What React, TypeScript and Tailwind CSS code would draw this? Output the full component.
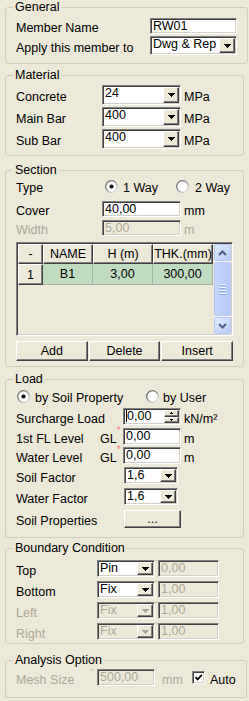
import React, { useId } from "react";

const sunken =
  "border border-t-[#808080] border-l-[#808080] border-r-white border-b-white shadow-[inset_1px_1px_0_#404040,inset_-1px_-1px_0_#d4d0c8]";
const raised =
  "border border-t-white border-l-white border-r-[#404040] border-b-[#404040] shadow-[inset_-1px_-1px_0_#808080] bg-[#ece9d8]";

function Arrow({ disabled }: { disabled?: boolean }) {
  const c = disabled ? "#aca899" : "#000";
  return (
    <svg width="7" height="4" viewBox="0 0 7 4" shapeRendering="crispEdges">
      <rect x="0" y="0" width="7" height="1" fill={c} />
      <rect x="1" y="1" width="5" height="1" fill={c} />
      <rect x="2" y="2" width="3" height="1" fill={c} />
      <rect x="3" y="3" width="1" height="1" fill={c} />
    </svg>
  );
}

function Edit({
  value,
  className = "",
  disabled,
  caret,
}: {
  value: string;
  className?: string;
  disabled?: boolean;
  caret?: boolean;
}) {
  return (
    <div
      className={`${sunken} ${className} flex items-start p-[1px] pl-[2px] leading-[12px] ${
        disabled ? "bg-[#ece9d8] text-[#aca899]" : "bg-white"
      }`}
    >
      {caret && <span className="w-px h-[12px] bg-black" />}
      <span>{value}</span>
    </div>
  );
}

function Combo({
  value,
  className = "",
  disabled,
}: {
  value: string;
  className?: string;
  disabled?: boolean;
}) {
  return (
    <div
      className={`${sunken} ${className} flex p-[1px] ${
        disabled ? "bg-[#ece9d8] text-[#aca899]" : "bg-white"
      }`}
    >
      <span className="flex-1 pl-[1px] leading-[12px]">{value}</span>
      <div className={`${raised} w-[16px] flex items-center justify-center`}>
        <Arrow disabled={disabled} />
      </div>
    </div>
  );
}

function Radio({ checked }: { checked?: boolean }) {
  const id = useId();
  return (
    <svg width="13" height="13" viewBox="0 0 13 13">
      <defs>
        <linearGradient id={id} x1="0" y1="0" x2="1" y2="1">
          <stop offset="0" stopColor="#5a5a5a" />
          <stop offset="0.55" stopColor="#9a9a9a" />
          <stop offset="1" stopColor="#f4f4f4" />
        </linearGradient>
      </defs>
      <circle cx="6.5" cy="6.5" r="5.8" fill="#fff" stroke={`url(#${id})`} strokeWidth="1.3" />
      {checked && <circle cx="6.5" cy="6.5" r="2.1" fill="#000" />}
    </svg>
  );
}

function Group({
  title,
  className = "",
  body = "",
  children,
}: {
  title: string;
  className?: string;
  body?: string;
  children: React.ReactNode;
}) {
  return (
    <fieldset className={`mx-[5px] rounded-[3px] border border-[#d0d0bf] ${className}`}>
      <legend className="ml-[7px] px-[2px] leading-[14px]">{title}</legend>
      <div className={`px-[10px] ${body}`}>{children}</div>
    </fieldset>
  );
}

function Label({ children, className = "" }: { children: React.ReactNode; className?: string }) {
  return <span className={`shrink-0 pt-[4px] leading-[14px] ${className}`}>{children}</span>;
}

function Mark() {
  return (
    <span className="w-[3px] self-start -mt-[2px] text-[8px] leading-[8px] text-[#c8c5b5]">*</span>
  );
}

function ScrollBtn({ up }: { up?: boolean }) {
  return (
    <div className="h-[17px] rounded-[2px] border border-[#b4c7f5] bg-gradient-to-br from-[#e2ebfe] to-[#b7cbf8] flex items-center justify-center">
      <svg width="9" height="6" viewBox="0 0 9 6">
        <path
          d={up ? "M1 5 L4.5 1.5 L8 5" : "M1 1 L4.5 4.5 L8 1"}
          stroke="#4d6185"
          strokeWidth="2"
          fill="none"
        />
      </svg>
    </div>
  );
}

export default function App() {
  const head = `${raised} flex items-center justify-center leading-[14px]`;
  const cell = "bg-[#c0dcc0] border-r border-b border-[#a4b4a0] flex items-center justify-center";
  return (
    <div className="min-h-screen bg-[#ece9d8] text-black text-[12.5px] font-['Liberation_Sans',Arial,sans-serif]">
      <Group title="General" body="pb-[8px]">
        <div className="mt-[4px] h-[16px] flex items-center">
          <Label className="w-[134px]">Member Name</Label>
          <Edit value="RW01" className="w-[87px] h-[16px]" />
        </div>
        <div className="mt-[2px] h-[19px] flex items-center">
          <Label className="w-[134px]">Apply this member to</Label>
          <Combo value="Dwg & Rep" className="w-[87px] h-[19px]" />
        </div>
      </Group>

      <Group title="Material" className="mt-[4px]" body="pb-[6px]">
        {[
          ["Concrete", "24", "mt-[3px]"],
          ["Main Bar", "400", "mt-[2px]"],
          ["Sub Bar", "400", "mt-[2px]"],
        ].map(([l, v, m]) => (
          <div key={l} className={`${m} h-[20px] flex items-center`}>
            <Label className="w-[86px]">{l}</Label>
            <Combo value={v} className="w-[79px] h-[20px]" />
            <Label className="ml-[3px]">MPa</Label>
          </div>
        ))}
      </Group>

      <Group title="Section" className="mt-[7px]" body="pb-[5px]">
        <div className="mt-[1px] h-[16px] flex items-center">
          <Label className="w-[89px]">Type</Label>
          <div className="w-[71px] flex items-center gap-[5px]">
            <Radio checked />
            <Label>1 Way</Label>
          </div>
          <div className="flex items-center gap-[6px]">
            <Radio />
            <Label>2 Way</Label>
          </div>
        </div>
        <div className="mt-[7px] h-[16px] flex items-center">
          <Label className="w-[86px]">Cover</Label>
          <Edit value="40,00" className="w-[79px] h-[16px]" />
          <Label className="ml-[3px]">mm</Label>
        </div>
        <div className="mt-[3px] h-[16px] flex items-center text-[#aca899]">
          <Label className="w-[86px]">Width</Label>
          <Edit value="5,00" disabled className="w-[79px] h-[16px]" />
          <Label className="ml-[3px]">m</Label>
        </div>

        <div className={`${sunken} mt-[6px] h-[94px] flex p-[1px] bg-[#ece9d8]`}>
          <div className="flex-1 flex flex-col">
            <div className="h-[20px] flex">
              <div className={`${head} w-[25px]`}>-</div>
              <div className={`${head} w-[50px]`}>NAME</div>
              <div className={`${head} w-[60px]`}>H (m)</div>
              <div className={`${head} w-[60px]`}>THK.(mm)</div>
            </div>
            <div className="h-[21px] flex">
              <div className={`${head} w-[25px]`}>1</div>
              <div className={`${cell} w-[50px]`}>B1</div>
              <div className={`${cell} w-[60px]`}>3,00</div>
              <div className={`${cell} w-[60px]`}>300,00</div>
            </div>
          </div>
          <div className="w-[17px] flex flex-col bg-[#f7f6f1]">
            <ScrollBtn up />
            <div className="mt-[1px] flex-1 rounded-[2px] border border-[#b4c7f5] bg-gradient-to-r from-[#c6d6fc] to-[#b5c9f8] flex flex-col items-center justify-center gap-[1px]">
              {[0, 1, 2, 3].map((i) => (
                <div key={i} className="w-[7px] h-px bg-[#eef3fe] border-b border-[#8cb0f8] box-content" />
              ))}
            </div>
            <div className="mt-[1px]">
              <ScrollBtn />
            </div>
          </div>
        </div>

        <div className="mt-[5px] h-[20px] grid grid-cols-3 gap-[1px]">
          {["Add", "Delete", "Insert"].map((b) => (
            <div key={b} className={`${raised} flex items-center justify-center leading-[14px]`}>
              {b}
            </div>
          ))}
        </div>
      </Group>

      <Group title="Load" className="mt-[5px]" body="pb-[9px]">
        <div className="mt-[2px] h-[16px] flex items-center">
          <div className="ml-[1px] w-[129px] flex items-center gap-[5px]">
            <Radio checked />
            <Label>by Soil Property</Label>
          </div>
          <div className="flex items-center gap-[4px]">
            <Radio />
            <Label>by User</Label>
          </div>
        </div>
        <div className="mt-[4px] h-[17px] flex items-center">
          <Label className="w-[107px]">Surcharge Load</Label>
          <div className={`${sunken} w-[58px] h-[17px] bg-white flex p-[1px] pl-[2px]`}>
            <span className="w-px h-[12px] bg-black" />
            <span className="flex-1 leading-[12px]">0,00</span>
            <div className="w-[15px] flex flex-col">
              {[true, false].map((up) => (
                <div key={String(up)} className={`${raised} flex-1 flex items-center justify-center`}>
                  <svg width="3" height="2" viewBox="0 0 3 2" shapeRendering="crispEdges">
                    <rect x="1" y={up ? 0 : 1} width="1" height="1" fill="#000" />
                    <rect x="0" y={up ? 1 : 0} width="3" height="1" fill="#000" />
                  </svg>
                </div>
              ))}
            </div>
          </div>
          <Label className="ml-[3px]">kN/m²</Label>
        </div>
        {[
          ["1st FL Level", "mt-[3px]"],
          ["Water Level", "mt-[2px]"],
        ].map(([l, m]) => (
          <div key={l} className={`${m} h-[17px] flex items-center`}>
            <Label className="w-[84px]">{l}</Label>
            <div className="w-[23px] flex">
              <Label>GL</Label>
              <span className="text-[10px] leading-[9px] text-[#ff8080] self-start -mt-[2px]">*</span>
            </div>
            <Edit value="0,00" className="w-[58px] h-[17px]" />
            <Label className="ml-[3px]">m</Label>
          </div>
        ))}
        {[
          ["Soil Factor", "mt-[3px]"],
          ["Water Factor", "mt-[4px]"],
        ].map(([l, m]) => (
          <div key={l} className={`${m} h-[17px] flex items-center`}>
            <Label className="w-[108px]">{l}</Label>
            <Combo value="1,6" className="w-[54px] h-[17px]" />
          </div>
        ))}
        <div className="mt-[5px] h-[18px] flex items-center">
          <Label className="w-[108px]">Soil Properties</Label>
          <div className={`${raised} w-[57px] h-[18px] flex items-center justify-center leading-[12px]`}>
            ...
          </div>
        </div>
      </Group>

      <Group title="Boundary Condition" className="mt-[3px]" body="pb-[3px]">
        {[
          ["Top", "Pin", "0,00", false, "mt-[5px]"],
          ["Bottom", "Fix", "1,00", false, "mt-[4px]"],
          ["Left", "Fix", "1,00", true, "mt-[4px]"],
          ["Right", "Fix", "1,00", true, "mt-[4px]"],
        ].map(([l, c, v, d, m]) => (
          <div key={l as string} className={`${m} h-[17px] flex items-center`}>
            <Label className={`w-[81px] ${d ? "text-[#aca899]" : ""}`}>{l as string}</Label>
            <Combo value={c as string} disabled={d as boolean} className="w-[58px] h-[17px]" />
            <Mark />
            <Edit value={v as string} disabled className="w-[61px] h-[17px]" />
          </div>
        ))}
      </Group>

      <Group title="Analysis Option" className="mt-[9px]" body="pb-[11px]">
        <div className="mt-[2px] h-[17px] flex items-center">
          <Label className="w-[74px] text-[#aca899]">Mesh Size</Label>
          <span className="w-[7px] self-start -mt-[2px] text-[9px] leading-[9px] text-[#c8c5b5]">*</span>
          <Edit value="500,00" disabled className="w-[58px] h-[17px]" />
          <Label className="ml-[7px] w-[30px] text-[#aca899]">mm</Label>
          <div className={`${sunken} w-[13px] h-[13px] bg-white flex items-center justify-center`}>
            <svg width="9" height="9" viewBox="0 0 9 9">
              <path d="M1.5 4.2 L3.6 6.4 L7.8 1.8" stroke="#000" strokeWidth="1.8" fill="none" />
            </svg>
          </div>
          <Label className="ml-[5px]">Auto</Label>
        </div>
      </Group>
    </div>
  );
}
